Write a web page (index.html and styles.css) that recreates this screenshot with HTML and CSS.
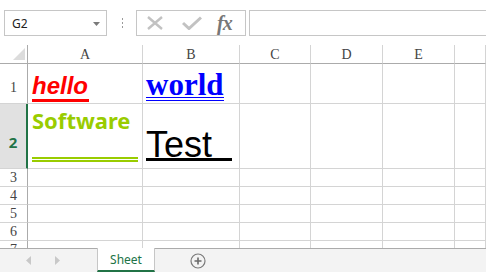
FILE: index.html
```html
<!DOCTYPE html>
<html>
<head>
<meta charset="utf-8">
<link rel="stylesheet" href="styles.css">
</head>
<body>
<div class="app">
  <div class="toolbar">
    <div class="namebox">
      <span class="nb-text">G2</span>
      <svg class="nb-arrow" width="7" height="4" viewBox="0 0 7 4"><polygon points="0,0 7,0 3.5,4" fill="#7a7a7a"/></svg>
    </div>
    <svg class="dots" width="3" height="12" viewBox="0 0 3 12"><rect x="1" y="1" width="1" height="2" fill="#9a9a9a"/><rect x="1" y="5" width="1" height="2" fill="#9a9a9a"/><rect x="1" y="9" width="1" height="2" fill="#9a9a9a"/></svg>
    <div class="fbtns">
      <svg class="ico-x" width="18" height="14" viewBox="0 0 18 14"><path d="M2 1 L16 13 M16 1 L2 13" stroke="#c2c2c2" stroke-width="2.4" fill="none"/></svg>
      <svg class="ico-check" width="20" height="14" viewBox="0 0 20 14"><path d="M1 7 L7 12.5 L19 1.5" stroke="#c2c2c2" stroke-width="3" fill="none"/></svg>
      <span class="fx">fx</span>
    </div>
    <div class="finput"></div>
  </div>

  <div class="sheet">
    <div class="corner"><svg width="12" height="12" viewBox="0 0 12 12"><polygon points="12,0 12,12 0,12" fill="#dcdcdc"/></svg></div>
    <div class="ch">A</div>
    <div class="ch">B</div>
    <div class="ch">C</div>
    <div class="ch">D</div>
    <div class="ch">E</div>
    <div class="ch"></div>

    <div class="rh rh-1">1</div>
    <div class="cell cell-a1"><span class="hello">hello</span></div>
    <div class="cell cell-b1"><span class="world">world</span></div>
    <div class="cell"></div><div class="cell"></div><div class="cell"></div><div class="cell"></div>

    <div class="rh rh-sel">2</div>
    <div class="cell cell-a2"><span class="software">Software</span><div class="dbl"></div></div>
    <div class="cell cell-b2"><span class="test">Test  </span></div>
    <div class="cell"></div><div class="cell"></div><div class="cell"></div><div class="cell"></div>

    <div class="rh">3</div>
    <div class="cell"></div><div class="cell"></div><div class="cell"></div><div class="cell"></div><div class="cell"></div><div class="cell"></div>
    <div class="rh">4</div>
    <div class="cell"></div><div class="cell"></div><div class="cell"></div><div class="cell"></div><div class="cell"></div><div class="cell"></div>
    <div class="rh">5</div>
    <div class="cell"></div><div class="cell"></div><div class="cell"></div><div class="cell"></div><div class="cell"></div><div class="cell"></div>
    <div class="rh">6</div>
    <div class="cell"></div><div class="cell"></div><div class="cell"></div><div class="cell"></div><div class="cell"></div><div class="cell"></div>
    <div class="rh">7</div>
    <div class="cell"></div><div class="cell"></div><div class="cell"></div><div class="cell"></div><div class="cell"></div><div class="cell"></div>
  </div>

  <div class="tabs">
    <svg class="nav nav-l" width="5" height="9" viewBox="0 0 5 9"><polygon points="5,0 5,9 0,4.5" fill="#c8c8c8"/></svg>
    <svg class="nav nav-r" width="5" height="9" viewBox="0 0 5 9"><polygon points="0,0 0,9 5,4.5" fill="#c8c8c8"/></svg>
    <div class="tab">Sheet</div>
    <svg class="add" width="16" height="16" viewBox="0 0 16 16"><circle cx="8" cy="8" r="7" stroke="#7a7a7a" stroke-width="1.2" fill="none"/><path d="M4.5 8 H11.5 M8 4.5 V11.5" stroke="#6a6a6a" stroke-width="1.6"/></svg>
  </div>
</div>
</body>
</html>
```

FILE: styles.css
```css
* { box-sizing: border-box; }
html, body { margin: 0; padding: 0; background: #fff; }
body { width: 486px; height: 272px; overflow: hidden; font-family: "Liberation Sans", Arial, sans-serif; }

.app { width: 486px; height: 272px; display: flex; flex-direction: column; overflow: hidden; }

.toolbar { height: 45px; flex: none; display: flex; align-items: flex-start; padding-top: 10px; }
.namebox { margin-left: 4px; width: 103px; height: 26px; border: 1px solid #c6c6c6; display: flex; align-items: center; justify-content: space-between; padding: 0 6px 0 7px; }
.nb-text { font-family: "Noto Sans", sans-serif; font-size: 12px; color: #222; }
.nb-arrow { margin-top: 1px; }
.dots { margin: 7px 0 0 14px; }
.fbtns { margin-left: 12px; width: 110px; height: 26px; border: 1px solid #c6c6c6; display: flex; align-items: center; padding-left: 9px; }
.ico-x { margin-right: 18px; }
.ico-check { margin-right: 15px; }
.fx { font-family: "Liberation Serif", serif; font-style: italic; font-weight: bold; font-size: 20px; color: #777; line-height: 20px; letter-spacing: -1px; }
.finput { flex: 1; margin-left: 3px; margin-right: -3px; height: 26px; border: 1px solid #c6c6c6; }

.sheet { height: 203px; flex: none; overflow: hidden; display: grid;
  grid-template-columns: 28px 115px 97px 71px 72px 72px 1fr;
  grid-template-rows: 19px 40px 65px 18px 18px 18px 18px 18px; }

.corner { border-right: 1px solid #ababab; border-bottom: 1px solid #ababab; display: flex; justify-content: flex-end; align-items: flex-end; padding: 0 2px 3px 0; }
.ch { border-right: 1px solid #d4d4d4; border-bottom: 1px solid #ababab; font-family: "Liberation Serif", serif; font-size: 14px; color: #444; display: flex; justify-content: center; align-items: center; padding-top: 2px; }

.rh { border-right: 1px solid #ababab; border-bottom: 1px solid #d4d4d4; font-family: "Liberation Serif", serif; font-size: 14px; color: #444; display: flex; justify-content: center; align-items: flex-end; padding-bottom: 0px; line-height: 16px; }
.rh-1 { padding-bottom: 7px; }
.rh-sel { background: #e1e1e1; border-right: 2px solid #217346; color: #217346; font-family: "Noto Sans", sans-serif; font-weight: bold; font-size: 15px; padding-bottom: 18px; }

.cell { border-right: 1px solid #d4d4d4; border-bottom: 1px solid #d4d4d4; display: flex; flex-direction: column; justify-content: flex-end; align-items: flex-start; overflow: visible; }

.cell-a1 { padding: 0 0 1px 4px; }
.hello { font-family: "Liberation Sans", Arial, sans-serif; font-weight: bold; font-style: italic; font-size: 24px; line-height: 22px; color: #ff0000; border-bottom: 3px solid #ff0000; padding-bottom: 2px; padding-right: 1px; }

.cell-b1 { padding: 0 0 2px 3px; }
.world { font-family: "Liberation Serif", serif; font-weight: bold; font-size: 31px; line-height: 24px; color: #0000ff; border-bottom: 4px double #0000ff; }

.cell-a2 { padding: 4px 4px 6px 4px; justify-content: space-between; align-items: stretch; }
.software { font-family: "Noto Sans", sans-serif; font-weight: bold; font-size: 22px; line-height: 24px; color: #99cc00; }
.dbl { height: 5px; border-top: 2px solid #99cc00; border-bottom: 2px solid #99cc00; }

.cell-b2 { padding: 0 0 7px 3px; }
.test { font-family: "Liberation Sans", Arial, sans-serif; font-size: 36px; line-height: 27px; color: #000; white-space: pre; border-bottom: 3px solid #000; }

.tabs { height: 24px; flex: none; background: #f3f3f3; border-top: 1px solid #ababab; display: flex; align-items: center; position: relative; }
.nav-l { margin-left: 26px; }
.nav-r { margin-left: 24px; }
.tab { margin-left: 37px; align-self: stretch; margin-top: -1px; width: 58px; background: #fff; border-left: 1px solid #c6c6c6; border-right: 1px solid #c6c6c6; border-bottom: 2px solid #217346; font-family: "Noto Sans", sans-serif; font-size: 12px; color: #217346; display: flex; align-items: center; justify-content: center; padding-top: 1px; }
.add { margin-left: 35px; }
```
